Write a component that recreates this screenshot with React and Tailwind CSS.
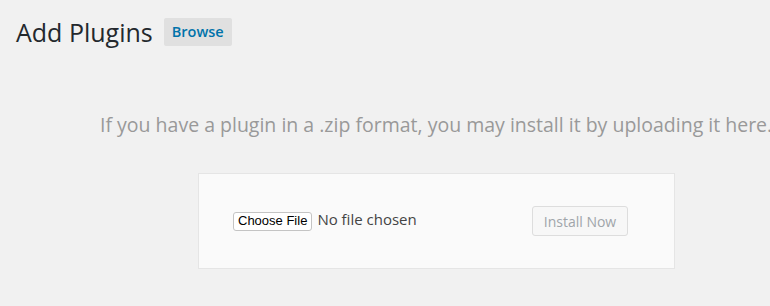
const App = () => {
  return (
    <div className="w-[770px] h-[306px] overflow-hidden bg-[#f1f1f1] font-['Open_Sans',sans-serif]">
      <div className="flex items-center pl-[16px] pt-[18px]">
        <h1 className="text-[25px] leading-[28px] text-[#23282d] font-normal">Add Plugins</h1>
        <span className="ml-[11px] h-[28px] w-[68px] flex items-center justify-center bg-[#e0e0e0] rounded-[2px] text-[14.5px] font-semibold text-[#0073aa]">
          Browse
        </span>
      </div>

      <p className="mt-[66px] pl-[100px] whitespace-nowrap text-[19.5px] leading-[26px] text-[#999]">
        If you have a plugin in a .zip format, you may install it by uploading it here.
      </p>

      <div className="mt-[35px] ml-[198px] w-[477px] h-[96px] bg-[#fafafa] border border-[#e5e5e5] flex items-center pl-[34px]">
        <span className="h-[19px] px-[4px] flex items-center bg-white border border-[#c4c4c4] rounded-[3px] text-[13px] text-black font-['Liberation_Sans',sans-serif]">
          Choose File
        </span>
        <span className="ml-[5px] text-[15px] text-[#444] -mt-[4px]">No file chosen</span>
        <span className="ml-auto mr-[46px] h-[30px] w-[96px] flex items-center justify-center border border-[#dddddd] rounded-[3px] bg-[#f7f7f7] text-[14px] text-[#a0a5aa]">
          Install Now
        </span>
      </div>
    </div>
  )
}

export default App
